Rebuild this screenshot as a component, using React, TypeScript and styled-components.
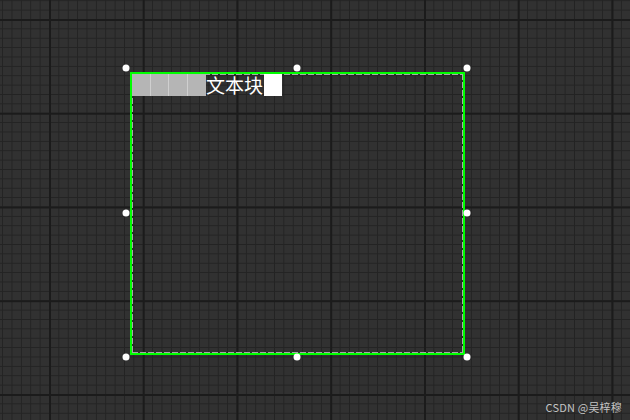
import React from "react";
import styled, { createGlobalStyle } from "styled-components";

const GlobalStyle = createGlobalStyle`
  html, body {
    margin: 0;
    padding: 0;
    background: #2b2b2b;
  }
`;

const MAJOR = 93.75;
const MINOR = 9.375;

const Canvas = styled.div`
  position: relative;
  width: 630px;
  height: 420px;
  overflow: hidden;
  background-color: #313131;
  background-image:
    linear-gradient(to right, #1b1b1b 2px, transparent 2px),
    linear-gradient(to bottom, #1b1b1b 2px, transparent 2px),
    linear-gradient(to right, #232323 1px, transparent 1px),
    linear-gradient(to bottom, #232323 1px, transparent 1px);
  background-size:
    ${MAJOR}px ${MAJOR}px,
    ${MAJOR}px ${MAJOR}px,
    ${MINOR}px ${MINOR}px,
    ${MINOR}px ${MINOR}px;
  background-position: 49px 19px, 49px 19px, 49px 19px, 49px 19px;
`;

const Selection = styled.div`
  position: absolute;
  left: 126px;
  top: 68px;
  width: 341px;
  height: 289px;
`;

const Frame = styled.div`
  box-sizing: border-box;
  margin: 4px 0 0 4px;
  width: 335px;
  height: 283px;
  border: 2px solid #00ff00;
`;

const Dashed = styled.div`
  position: relative;
  box-sizing: border-box;
  width: 331px;
  height: 279px;
  background-image:
    repeating-linear-gradient(to right, #a8a8a8 0 6px, transparent 6px 8px),
    repeating-linear-gradient(to right, #a8a8a8 0 6px, transparent 6px 8px),
    repeating-linear-gradient(to bottom, #a8a8a8 0 6px, transparent 6px 8px),
    repeating-linear-gradient(to bottom, #a8a8a8 0 6px, transparent 6px 8px);
  background-size: 100% 1px, 100% 1px, 1px 100%, 1px 100%;
  background-position: 0 0, 0 100%, 0 0, 100% 0;
  background-repeat: no-repeat;
`;

const TextRow = styled.div`
  display: flex;
  align-items: center;
  height: 22px;
`;

const Slot = styled.span<{ $white?: boolean }>`
  box-sizing: border-box;
  display: block;
  width: ${(p) => (p.$white ? 18 : 18.5)}px;
  height: 22px;
  background: ${(p) => (p.$white ? "#ffffff" : "#b5b5b5")};
  border-right: ${(p) => (p.$white ? "none" : "1px solid #cfcfcf")};
  &:nth-child(4) {
    border-right: none;
  }
`;

const Label = styled.span`
  font-family: "Noto Sans CJK SC", "Noto Sans", sans-serif;
  font-size: 19px;
  line-height: 22px;
  color: #ffffff;
  margin: 0 1px 0 0;
`;

const Handle = styled.span<{ $x: number; $y: number }>`
  position: absolute;
  left: ${(p) => p.$x}%;
  top: ${(p) => p.$y}%;
  width: 7px;
  height: 7px;
  border-radius: 50%;
  background: #ffffff;
  transform: translate(-50%, -50%);
`;

const Watermark = styled.div`
  position: absolute;
  right: 8px;
  bottom: 5px;
  font-family: "Noto Sans CJK SC", "DejaVu Sans", sans-serif;
  font-size: 11px;
  color: #c4c4c4;
  letter-spacing: 0.2px;
`;

const handles: [number, number][] = [
  [0, 0],
  [50, 0],
  [100, 0],
  [0, 50],
  [100, 50],
  [0, 100],
  [50, 100],
  [100, 100],
];

const App = () => {
  return (
    <>
      <GlobalStyle />
      <Canvas>
        <Selection>
          <Frame>
            <Dashed>
              <TextRow>
                <Slot />
                <Slot />
                <Slot />
                <Slot />
                <Label>文本块</Label>
                <Slot $white />
              </TextRow>
            </Dashed>
          </Frame>
          {handles.map(([x, y]) => (
            <Handle key={`${x}-${y}`} $x={x} $y={y} />
          ))}
        </Selection>
        <Watermark>CSDN @吴梓穆</Watermark>
      </Canvas>
    </>
  );
};

export default App;
